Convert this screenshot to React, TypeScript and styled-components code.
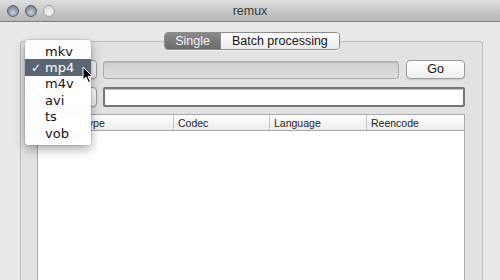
import React from "react"
import styled, { createGlobalStyle } from "styled-components"

const Global = createGlobalStyle`
html, body {
  margin: 0;
  padding: 0;
  background: #e9e9e9;
}
body {
  font-family: "Liberation Sans", Arial, sans-serif;
}
`

const Window = styled.div`
position: relative;
width: 500px;
height: 280px;
overflow: hidden;
background: #e9e9e9;
display: flex;
flex-direction: column;
`

const TitleBar = styled.div`
height: 21px;
flex: none;
display: flex;
align-items: center;
justify-content: center;
position: relative;
background: linear-gradient(#dedede, #b6b6b6);
border-bottom: 1px solid #808080;
font-size: 12.5px;
color: #3a3a3a;
`

const Lights = styled.div`
position: absolute;
left: 7px;
top: 5px;
display: flex;
gap: 6px;
`

const Light = styled.span<{ $off?: boolean }>`
width: 12px;
height: 12px;
border-radius: 50%;
box-sizing: border-box;
border: 1px solid ${p => (p.$off ? "#a4a4a4" : "#59636c")};
background: ${p =>
    p.$off
        ? "radial-gradient(circle at 50% 65%, #f6f6f6, #cfcfcf)"
        : "radial-gradient(circle at 50% 65%, #c9d5de, #7b8b97 70%, #66737d)"};
`

const Body = styled.div`
flex: 1;
display: flex;
flex-direction: column;
padding: 10px 17px 0 20px;
min-height: 0;
`

const Segments = styled.div`
position: relative;
z-index: 1;
align-self: center;
display: flex;
height: 18px;
margin-left: 1px;
border: 1px solid #8c8c8c;
border-radius: 4px;
overflow: hidden;
box-sizing: border-box;
box-shadow: 0 1px 0 rgba(255,255,255,0.6);
`

const Segment = styled.div<{ $on?: boolean }>`
display: flex;
align-items: center;
justify-content: center;
font-size: 12.5px;
padding: 0 ${p => (p.$on ? "10px" : "11px")};
color: ${p => (p.$on ? "#f4f4f4" : "#151515")};
background: ${p => (p.$on ? "linear-gradient(#8a8a8a, #6b6b6b)" : "linear-gradient(#ffffff, #ececec)")};
& + & {
  border-left: 1px solid #8c8c8c;
}
`

const GroupBox = styled.div`
margin-top: -9px;
flex: 1;
display: flex;
flex-direction: column;
gap: 7px;
padding: 17px 17px 0 16px;
border: 1px solid #bdbdbd;
border-bottom: none;
border-radius: 4px 4px 0 0;
background: #e2e2e2;
`

const Row = styled.div`
display: flex;
align-items: center;
gap: 6px;
`

// the popup and "save" buttons sit under the open menu, so their labels are hidden
const PushButton = styled.div<{ $w: number; $h?: number }>`
width: ${p => p.$w}px;
height: ${p => p.$h ?? 19}px;
flex: none;
box-sizing: border-box;
display: flex;
align-items: center;
justify-content: center;
border: 1px solid #9b9b9b;
border-radius: 4px;
background: linear-gradient(#ffffff, #eeeeee);
box-shadow: 0 1px 1px rgba(0,0,0,0.12);
font-size: 12.5px;
color: #111;
`

const Progress = styled.div`
flex: 1;
height: 16px;
margin-top: 2px;
border: 1px solid #aaaaaa;
border-radius: 3px;
background: linear-gradient(#cfcfcf, #dedede);
box-shadow: inset 0 1px 1px rgba(0,0,0,0.1);
`

const TextField = styled.div`
flex: 1;
height: 20px;
margin-top: 1px;
box-sizing: border-box;
border: 2px solid #72787f;
border-radius: 2px;
background: #fff;
box-shadow: inset 0 1px 1px rgba(0,0,0,0.25);
`

const Table = styled.div`
flex: 1;
border: 1px solid #a9a9a9;
border-bottom: none;
background: #fff;
`

const Header = styled.div`
display: grid;
grid-template-columns: 39px 96px 96px 97px 1fr;
height: 15px;
border-bottom: 1px solid #a8a8a8;
background: linear-gradient(#ffffff, #ececec);
`

const Col = styled.div`
display: flex;
align-items: center;
padding-left: 4px;
font-size: 10.5px;
color: #1c1c1c;
& + & {
  border-left: 1px solid #c4c4c4;
}
`

const Menu = styled.div`
position: absolute;
left: 25px;
top: 40px;
width: 66px;
padding: 3px 0 4px;
box-sizing: border-box;
background: rgba(255,255,255,0.97);
border-radius: 4px;
box-shadow: 0 4px 11px rgba(0,0,0,0.35), 0 0 0 1px rgba(0,0,0,0.08);
z-index: 5;
`

const Item = styled.div<{ $on?: boolean }>`
position: relative;
height: 16.4px;
display: flex;
align-items: center;
padding-left: 20px;
font-size: 13px;
font-family: "DejaVu Sans", sans-serif;
color: ${p => (p.$on ? "#fff" : "#111")};
background: ${p => (p.$on ? "#5a6674" : "transparent")};
`

const Check = styled.span`
position: absolute;
left: 6px;
font-size: 12px;
`

const Cursor = styled.svg`
position: absolute;
left: 82px;
top: 66px;
z-index: 6;
`

const formats = ["mkv", "mp4", "m4v", "avi", "ts", "vob"]

const App = () =>
    <Window>
        <Global />
        <TitleBar>
            <Lights>
                <Light />
                <Light />
                <Light $off />
            </Lights>
            remux
        </TitleBar>
        <Body>
            <Segments>
                <Segment $on>Single</Segment>
                <Segment>Batch processing</Segment>
            </Segments>
            <GroupBox>
                <Row>
                    <PushButton $w={60} />
                    <Progress />
                    <PushButton $w={59} style={{ marginLeft: 1 }}>Go</PushButton>
                </Row>
                <Row>
                    <PushButton $w={60} $h={20} />
                    <TextField />
                </Row>
                <Table>
                    <Header>
                        <Col />
                        <Col>Type</Col>
                        <Col>Codec</Col>
                        <Col>Language</Col>
                        <Col>Reencode</Col>
                    </Header>
                </Table>
            </GroupBox>
        </Body>
        <Menu>
            {formats.map(f =>
                <Item key={f} $on={f === "mp4"}>
                    {f === "mp4" && <Check>✓</Check>}
                    {f}
                </Item>
            )}
        </Menu>
        <Cursor width="12" height="18" viewBox="0 0 12 18">
            <path d="M1 1 L1 14 L4 11 L6.5 16.5 L8.5 15.6 L6 10.3 L10.2 10.3 Z" fill="#000" stroke="#fff" strokeWidth="1" strokeLinejoin="round" />
        </Cursor>
    </Window>

export default App
